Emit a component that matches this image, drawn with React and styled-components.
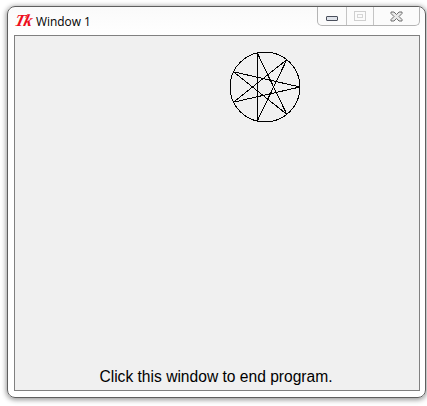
import React from 'react'
import styled, { createGlobalStyle } from 'styled-components'

const Global = createGlobalStyle`
  html, body { margin: 0; padding: 0; background: #fff; }
  body { width: 427px; height: 406px; overflow: hidden; }
`
const Page = styled.div`
  padding: 6px 1px 0 7px;
`
const Window = styled.div`
  box-sizing: border-box;
  width: 419px;
  height: 392px;
  padding: 0 6px 6px 6px;
  display: flex;
  flex-direction: column;
  background: linear-gradient(#fafafa, #ffffff 30px);
  border: 1px solid #5f5f5f;
  border-radius: 8px;
  box-shadow: 0 1px 5px 1px rgba(0, 0, 0, 0.4);
`
const TitleBar = styled.div`
  height: 28px;
  flex: none;
  display: flex;
  justify-content: space-between;
`
const TitleLeft = styled.div`
  display: flex;
  align-items: center;
  gap: 4px;
  padding: 0 0 0 2px;
  height: 27px;
`
const TkLogo = styled.span`
  font: italic 700 17px/16px "Liberation Serif", serif;
  color: #ee0f1c;
  width: 16px;
  letter-spacing: -1.5px;
  transform: translateX(-1px) skewX(-14deg);
`
const Title = styled.span`
  font: 11.9px/16px "Open Sans", "Noto Sans", sans-serif;
  color: #000;
`
const Controls = styled.div`
  display: flex;
  height: 19px;
  box-sizing: border-box;
  border: 1px solid #b4b4b4;
  border-top: none;
  border-radius: 0 0 5px 5px;
  background: #fbfbfb;
  margin-right: -1px;
`
const ControlButton = styled.div`
  box-sizing: border-box;
  width: ${p => p.$w}px;
  display: flex;
  align-items: center;
  justify-content: center;
  & + & { border-left: 1px solid #c4c4c4; }
`
const MinIcon = styled.div`
  width: 12px;
  height: 5px;
  margin-top: 5px;
  box-sizing: border-box;
  border: 1px solid #4a4f5c;
  border-radius: 1px;
  background: #dfe3ea;
`
const MaxIcon = styled.div`
  width: 12px;
  height: 10px;
  box-sizing: border-box;
  border: 1px solid #cfcfcf;
  display: flex;
  align-items: center;
  justify-content: center;
  &::after {
    content: '';
    width: 4px;
    height: 2px;
    border: 1px solid #d6d6d6;
  }
`
const Canvas = styled.div`
  position: relative;
  flex: 1;
  margin-right: -1px;
  display: flex;
  align-items: flex-end;
  justify-content: center;
  background: #f0f0f0;
  border: 1px solid #808080;
`
const Message = styled.div`
  font: 15.6px/18px "Liberation Sans", Arial, sans-serif;
  color: #000;
  padding-bottom: 4px;
  margin-right: 2px;
`
const StarSvg = styled.svg`
  position: absolute;
  left: 214px;
  top: 15px;
`

const R = 35
const C = 36
const points = Array.from({ length: 7 }, (_, k) => {
  const a = (k * 3 * 2 * Math.PI) / 7
  return `${(C + R * Math.cos(a)).toFixed(2)},${(C + R * Math.sin(a)).toFixed(2)}`
}).join(' ')

const Star = () => (
  <StarSvg width="72" height="72" viewBox="0 0 72 72" shapeRendering="crispEdges">
    <circle cx={C} cy={C} r={R} fill="none" stroke="#000" strokeWidth="1" />
    <polygon points={points} fill="none" stroke="#000" strokeWidth="1" />
  </StarSvg>
)

const CloseIcon = () => (
  <svg width="13" height="11" viewBox="0 0 13 11">
    <path
      d="M1 1H4L6.5 3.5L9 1H12V2.5L9 5.5L12 8.5V10H9L6.5 7.5L4 10H1V8.5L4 5.5L1 2.5Z"
      fill="#e8e8e8"
      stroke="#6e6e6e"
      strokeWidth="1"
    />
  </svg>
)

export default function App() {
  return (
    <Page>
      <Global />
      <Window>
        <TitleBar>
          <TitleLeft>
            <TkLogo>Tk</TkLogo>
            <Title>Window 1</Title>
          </TitleLeft>
          <Controls>
            <ControlButton $w={28}><MinIcon /></ControlButton>
            <ControlButton $w={27}><MaxIcon /></ControlButton>
            <ControlButton $w={46}><CloseIcon /></ControlButton>
          </Controls>
        </TitleBar>
        <Canvas>
          <Star />
          <Message>Click this window to end program.</Message>
        </Canvas>
      </Window>
    </Page>
  )
}
